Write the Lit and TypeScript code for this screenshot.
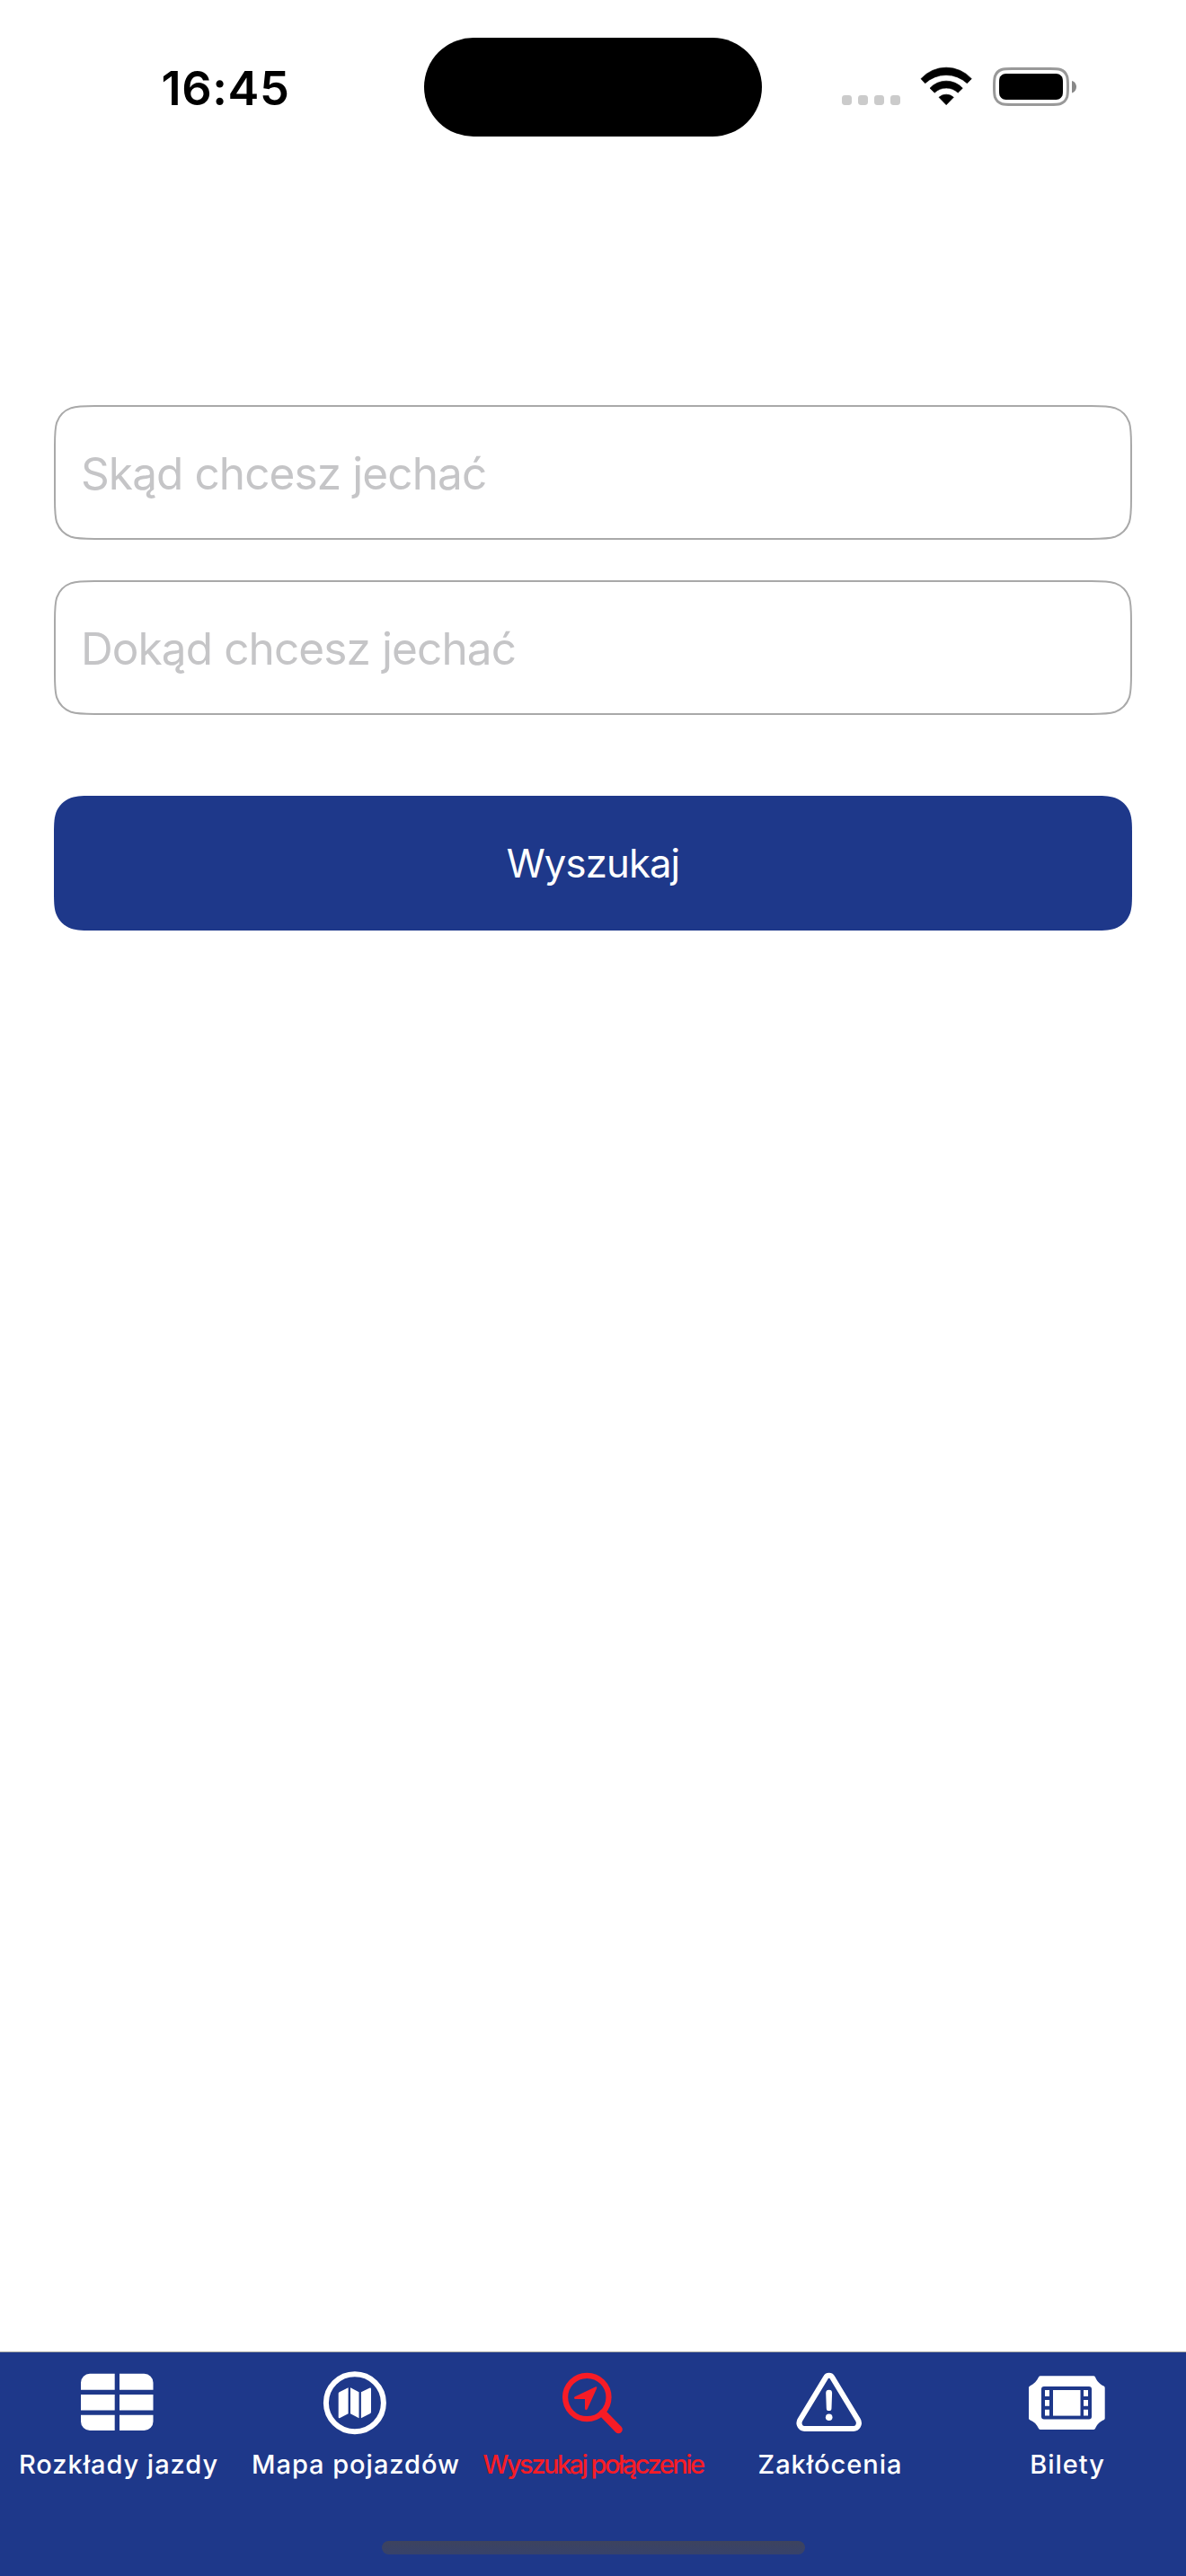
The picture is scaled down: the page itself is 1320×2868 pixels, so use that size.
import { LitElement, html, css, svg, TemplateResult } from "lit";
import { customElement, property } from "lit/decorators.js";

/** Outline of a rectangle with continuous (superelliptic) corners. */
function squircle(x: number, y: number, w: number, h: number, r: number): string {
  const a = 1.52866483 * r;
  const b = 1.08849296 * r;
  const c = 0.86840694 * r;
  const d = 0.63149379 * r;
  const e = 0.07491139 * r;
  const f = 0.37282383 * r;
  const g = 0.16905956 * r;
  const R = x + w;
  const B = y + h;
  return [
    `M${x + a} ${y}H${R - a}`,
    `C${R - b} ${y} ${R - c} ${y} ${R - d} ${y + e}`,
    `C${R - f} ${y + g} ${R - g} ${y + f} ${R - e} ${y + d}`,
    `C${R} ${y + c} ${R} ${y + b} ${R} ${y + a}V${B - a}`,
    `C${R} ${B - b} ${R} ${B - c} ${R - e} ${B - d}`,
    `C${R - g} ${B - f} ${R - f} ${B - g} ${R - d} ${B - e}`,
    `C${R - c} ${B} ${R - b} ${B} ${R - a} ${B}H${x + a}`,
    `C${x + b} ${B} ${x + c} ${B} ${x + d} ${B - e}`,
    `C${x + f} ${B - g} ${x + g} ${B - f} ${x + e} ${B - d}`,
    `C${x} ${B - c} ${x} ${B - b} ${x} ${B - a}V${y + a}`,
    `C${x} ${y + b} ${x} ${y + c} ${x + e} ${y + d}`,
    `C${x + g} ${y + f} ${x + f} ${y + g} ${x + d} ${y + e}`,
    `C${x + c} ${y} ${x + b} ${y} ${x + a} ${y}Z`,
  ].join("");
}

@customElement("status-bar")
export class StatusBar extends LitElement {
  static styles = css`
    :host {
      display: grid;
      grid-template-columns: 472px 376px 1fr;
      height: 194px;
      box-sizing: border-box;
      padding-top: 42px;
      align-items: start;
    }
    .time {
      padding-left: 30px;
      height: 112px;
      line-height: 112px;
      text-align: center;
      font-size: 52.3px;
      font-weight: 600;
      letter-spacing: 0.6px;
      color: #000;
    }
    .island {
      height: 110px;
      border-radius: 55px;
      background: #000;
    }
    .icons {
      display: flex;
      align-items: flex-start;
      padding: 32px 0 0 88px;
    }
    svg {
      display: block;
    }
    .dots {
      margin-right: 21px;
    }
    .wifi {
      margin-right: 23px;
    }
  `;

  render() {
    return html`
      <div class="time">16:45</div>
      <div class="island"></div>
      <div class="icons">
        <svg class="dots" width="67" height="45" viewBox="0 0 67 45" fill="#cbcbcb">
          ${[1, 19, 37, 55].map((x) => svg`<rect x=${x} y="32" width="11" height="11" rx="3.4" />`)}
        </svg>
        <svg class="wifi" width="58" height="45" viewBox="673 132 174 135" stroke="#000" stroke-width="2" stroke-linejoin="round">
          <path d="M676 173A114 114 0 0 1 845 173L830 188A103 103 0 0 0 690 188Z" />
          <path d="M706 204.500A74 74 0 0 1 815 204.500L799.500 219.500A57 57 0 0 0 721.500 219.500Z" />
          <path d="M736 235A36 36 0 0 1 785 235L760.500 260Z" />
        </svg>
        <svg width="95" height="45" viewBox="0 0 95 45">
          <path d=${squircle(1.5, 2.5, 82, 40, 13)} fill="none" stroke="#999" stroke-width="3" />
          <path d=${squircle(7, 8, 71, 29, 7.5)} />
          <path d="M88 16C91.500 17 93 20 93 22.700C93 25.500 91.500 28.400 88 29.600Z" fill="#888" />
        </svg>
      </div>
    `;
  }
}

@customElement("smooth-box")
export class SmoothBox extends LitElement {
  @property() variant: "outline" | "solid" = "outline";

  static styles = css`
    :host {
      display: block;
      height: 150px;
    }
    .box {
      display: grid;
      height: 150px;
    }
    .box > * {
      grid-area: 1 / 1;
    }
    svg {
      display: block;
    }
    .text {
      height: 150px;
      line-height: 152px;
      white-space: nowrap;
    }
    .outline {
      padding-left: 30px;
      font-size: 49.5px;
      letter-spacing: -0.9px;
      color: #c5c5c7;
    }
    .solid {
      text-align: center;
      font-size: 43.7px;
      letter-spacing: -0.88px;
      color: #fff;
    }
  `;

  render() {
    const outline = this.variant === "outline";
    return html`
      <div class="box">
        <svg width="1200" height="150" viewBox="0 0 1200 150">
          ${outline
            ? svg`<path d=${squircle(1, 1, 1198, 148, 29)} fill="#fff" stroke="#a9a9a9" stroke-width="2" />`
            : svg`<path d=${squircle(0, 0, 1200, 150, 30)} fill="#1e388a" />`}
        </svg>
        <div class="text ${this.variant}"><slot></slot></div>
      </div>
    `;
  }
}

interface Tab {
  label: string;
  icon: TemplateResult;
  active?: boolean;
}

const TABS: Tab[] = [
  {
    label: "Rozkłady jazdy",
    icon: svg`
      <path d="M13 3.700H40.700V21.700H3V13.700A10 10 0 0 1 13 3.700Z" />
      <path d="M46 3.700H73.500A10 10 0 0 1 83.500 13.700V21.700H46Z" />
      <path d="M3 27H40.700V44.500H3Z" />
      <path d="M46 27H83.500V44.500H46Z" />
      <path d="M3 49.700H40.700V67H13A10 10 0 0 1 3 57Z" />
      <path d="M46 49.700H83.500V57A10 10 0 0 1 73.500 67H46Z" />
    `,
  },
  {
    label: "Mapa pojazdów",
    icon: svg`
      <circle cx="43.900" cy="36.200" r="32" fill="none" stroke="currentColor" stroke-width="6" />
      <path d="M26.600 24.200L36.600 19.200V48.200L27.400 53Q25.700 53.700 25.700 52V25.800Q25.700 24.700 26.600 24.200Z" />
      <path d="M39 19.200L48.500 24.200V53.200L39 48.300Z" />
      <path d="M50.900 24.200L60.200 19.700Q62 19 62 20.800V46.600Q62 47.500 61.200 48L50.900 53.200Z" />
    `,
  },
  {
    label: "Wyszukaj połączenie",
    active: true,
    icon: svg`
      <circle cx="38.300" cy="30" r="24.200" fill="none" stroke="currentColor" stroke-width="6.200" />
      <path d="M56 48L73.400 65.800" stroke="currentColor" stroke-width="8.800" stroke-linecap="round" />
      <path d="M25 29.200L47.600 18.500Q50.300 17.700 49 20.500L38.800 43Q38 44.500 36.900 44Q36 43.700 36 42.500V32H25.500Q24.200 32 24 31Q23.900 29.800 25 29.200Z" />
    `,
  },
  {
    label: "Zakłócenia",
    icon: svg`
      <path
        d="M39.700 8.500C41.500 4.900 45.900 4.900 47.700 8.500L76.100 55.400C78.400 60 75.500 65 71 65H16.400C11.900 65 9 60 11.300 55.400Z"
        fill="none" stroke="currentColor" stroke-width="6" />
      <path d="M40.200 25.300A3.450 3.450 0 0 1 47.100 25.300L46.500 42.200A2.850 2.850 0 0 1 40.800 42.200Z" />
      <circle cx="43.700" cy="52.300" r="3.800" />
    `,
  },
  {
    label: "Bilety",
    icon: svg`
      <path
        fill-rule="evenodd"
        d="M15 6.200H74Q75.300 6.200 76 7.400C77.500 11.500 81 15.500 85.500 17.400Q86.700 18 86.700 19.400V53.400Q86.700 54.500 85.500 55.200C81 57 77.500 61 76 64.800Q75.300 66 74 66H15Q13.700 66 13 64.800C11 60.500 8 57 3.200 55.200Q2 54.500 2 53.400V19.400Q2 18 3.200 17.400C8 15 11 11.500 13 7.400Q13.700 6.200 15 6.200Z
           M19 18Q16 18 16 21V51.500Q16 54.500 19 54.500H69Q72 54.500 72 51.500V21Q72 18 69 18Z" />
      <path d="M20 22H25V29H20ZM20 33H25V39.800H20ZM20 43.800H25V50.600H20Z" />
      <path d="M63 22H68V29H63ZM63 33H68V39.800H63ZM63 43.800H68V50.600H63Z" />
      <path d="M29 22H59.500V50.600H29Z" />
    `,
  },
];

@customElement("tab-bar")
export class TabBar extends LitElement {
  static styles = css`
    :host {
      display: flex;
      flex-direction: column;
      height: 250px;
      box-sizing: border-box;
      border-top: 1px solid #a6a8a4;
      background: #1e388a;
    }
    .tabs {
      display: grid;
      grid-template-columns: repeat(5, 264px);
      padding-top: 20px;
      flex: 1;
    }
    .tab {
      display: flex;
      flex-direction: column;
      align-items: center;
      color: #fff;
    }
    .tab svg {
      display: block;
      fill: currentColor;
    }
    .label {
      margin-top: 15px;
      line-height: 36px;
      font-size: 29px;
      font-weight: 450;
      letter-spacing: 0.97px;
      white-space: nowrap;
    }
    .active {
      color: #f71c26;
    }
    .active .label {
      letter-spacing: -2.5px;
    }
    .home {
      width: 471px;
      height: 15px;
      margin: 0 auto 24px;
      border-radius: 8px;
      background: linear-gradient(#3d435e, #37426b);
    }
  `;

  render() {
    return html`
      <div class="tabs">
        ${TABS.map(
          (t) => html`
            <div class="tab ${t.active ? "active" : ""}">
              <svg width="90" height="72" viewBox="0 0 90 72">${t.icon}</svg>
              <div class="label">${t.label}</div>
            </div>
          `
        )}
      </div>
      <div class="home"></div>
    `;
  }
}

@customElement("app-root")
export class AppRoot extends LitElement {
  static styles = css`
    :host {
      display: flex;
      flex-direction: column;
      width: 1320px;
      height: 2868px;
      background: #fff;
      font-family: Inter, "Liberation Sans", sans-serif;
    }
    .form {
      flex: 1;
      display: flex;
      flex-direction: column;
      gap: 45px;
      padding: 257px 60px 0;
    }
    .submit {
      margin-top: 45px;
    }
  `;

  render() {
    return html`
      <status-bar></status-bar>
      <div class="form">
        <smooth-box>Skąd chcesz jechać</smooth-box>
        <smooth-box>Dokąd chcesz jechać</smooth-box>
        <smooth-box class="submit" variant="solid">Wyszukaj</smooth-box>
      </div>
      <tab-bar></tab-bar>
    `;
  }
}
